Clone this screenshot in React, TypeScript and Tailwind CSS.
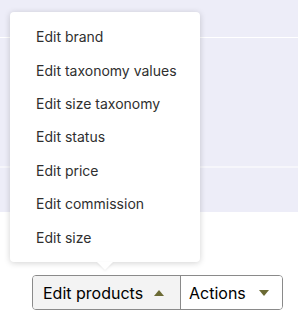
import React from "react";

const items = [
  "Edit brand",
  "Edit taxonomy values",
  "Edit size taxonomy",
  "Edit status",
  "Edit price",
  "Edit commission",
  "Edit size",
];

function Caret({ up }: { up?: boolean }) {
  return (
    <svg width="10" height="6" viewBox="0 0 10 6" className="shrink-0">
      <path d={up ? "M0 6 L5 0 L10 6 Z" : "M0 0 L10 0 L5 6 Z"} fill="#6b6a34" />
    </svg>
  );
}

export default function App() {
  return (
    <div
      className="relative h-[328px] w-[298px] overflow-hidden bg-white"
      style={{ fontFamily: "Inter, 'Noto Sans', sans-serif" }}
    >
      {/* table rows behind the menu */}
      <div className="flex flex-col bg-[#ededf8]">
        <div className="h-[38px] border-b border-white" />
        <div className="h-[130px] border-b-2 border-[#f6f6fb]" />
        <div className="h-[44px]" />
      </div>

      {/* dropdown menu */}
      <div className="absolute left-[10px] top-[12px] w-[190px] rounded-[4px] bg-white py-[8px] shadow-[0_1px_6px_rgba(0,0,0,0.18)]">
        <ul className="flex flex-col">
          {items.map((label) => (
            <li
              key={label}
              className="flex h-[33.4px] items-center pl-[26px] text-[14px] text-[#2f2f2f]"
            >
              {label}
            </li>
          ))}
        </ul>
        <div className="absolute left-[87px] top-full h-0 w-0 border-x-[8px] border-t-[8px] border-x-transparent border-t-white drop-shadow-[0_1px_1px_rgba(0,0,0,0.08)]" />
      </div>

      {/* button group */}
      <div className="absolute left-[32px] top-[275px] flex h-[35px] overflow-hidden rounded-[4px] border border-[#8a8a8a] text-[16px] text-black">
        <button className="flex w-[147px] items-center gap-[11px] bg-[#f3f3f3] pl-[10px]">
          <span>Edit products</span>
          <Caret up />
        </button>
        <button className="flex w-[102px] items-center gap-[13px] border-l border-[#8a8a8a] bg-white pl-[8px]">
          <span>Actions</span>
          <Caret />
        </button>
      </div>
    </div>
  );
}
